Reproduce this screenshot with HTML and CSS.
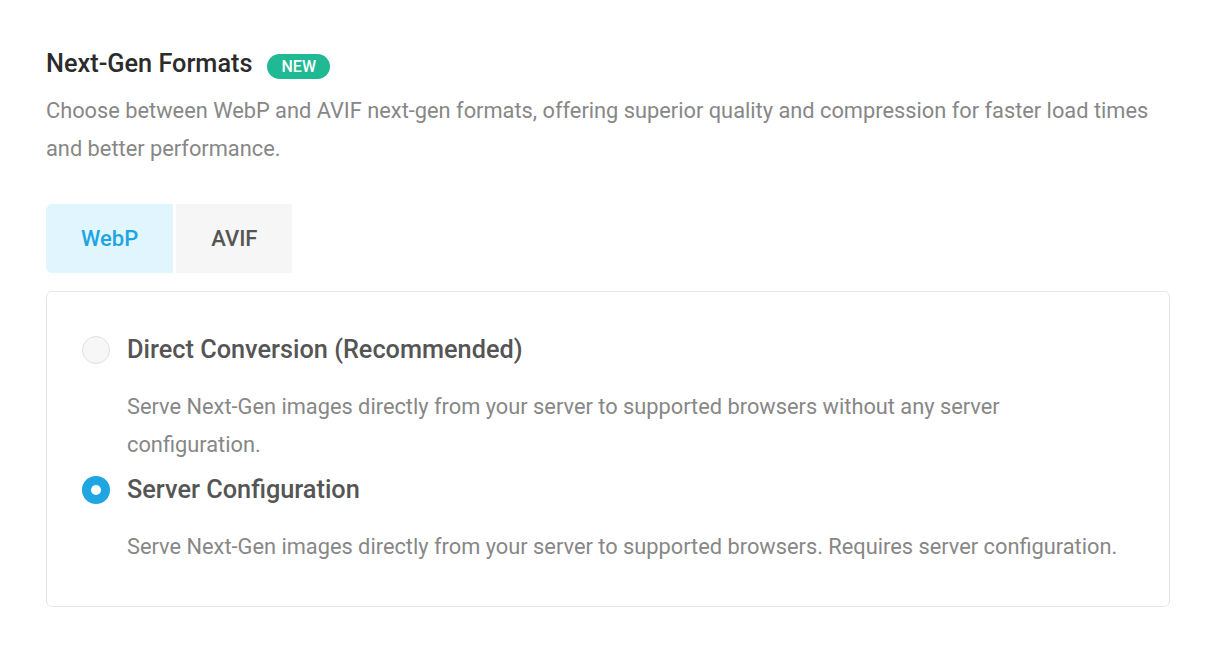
FILE: index.html
```html
<!DOCTYPE html>
<html lang="en">
<head>
  <meta charset="UTF-8">
  <meta name="viewport" content="width=device-width, initial-scale=1.0">
  <title>Next-Gen Formats</title>
  <link rel="stylesheet" href="styles.css">
</head>
<body>

  <div class="settings">
    <h2 class="title">Next-Gen Formats <span class="badge">NEW</span></h2>
    <p class="intro">Choose between WebP and AVIF next-gen formats, offering superior quality and compression for faster load times and better performance.</p>

    <div class="tabs">
      <button class="tab active">WebP</button>
      <button class="tab">AVIF</button>
    </div>

    <div class="panel">
      <label class="option">
        <span class="radio"></span>
        <span class="option-label">Direct Conversion (Recommended)</span>
      </label>
      <p class="option-desc">Serve Next-Gen images directly from your server to supported browsers without any server configuration.</p>

      <label class="option">
        <span class="radio checked"></span>
        <span class="option-label">Server Configuration</span>
      </label>
      <p class="option-desc">Serve Next-Gen images directly from your server to supported browsers. Requires server configuration.</p>
    </div>
  </div>

</body>
</html>
```

FILE: styles.css
```css
body {
  margin: 0;
  background: #fff;
  font-family: Roboto, Arial, sans-serif;
}
.settings {
  width: 1124px;
  padding: 48px 0 0 46px;
}
.title {
  margin: 0;
  font-size: 25.3px;
  line-height: 32px;
  font-weight: 500;
  color: #2b2b2b;
  display: flex;
  align-items: center;
  gap: 15px;
}
.badge {
  background: #1fb993;
  color: #fff;
  font-size: 16px;
  font-weight: 500;
  line-height: 25px;
  padding: 0 14px;
  border-radius: 13px;
  margin-top: 4px;
}
.intro {
  margin: 12px 0 0;
  font-size: 21.8px;
  line-height: 38px;
  color: #878787;
}
.tabs {
  display: flex;
  gap: 3px;
  margin-top: 36px;
}
.tab {
  border: none;
  font-family: inherit;
  font-size: 22px;
  font-weight: 500;
  height: 69px;
  padding: 0 35px;
  background: #f6f6f6;
  color: #555;
  cursor: pointer;
}
.tab.active {
  background: #e1f5fe;
  color: #1ea5e2;
  border-radius: 6px 0 0 6px;
}
.panel {
  margin-top: 18px;
  border: 1px solid #e6e6e6;
  border-radius: 6px;
  padding: 40px 35px 40px 35px;
}
.option {
  display: flex;
  align-items: center;
  gap: 17px;
  cursor: pointer;
}
.option + .option-desc {
  margin-top: 20px;
}
.option-desc + .option {
  margin-top: 8px;
}
.radio {
  width: 26px;
  height: 26px;
  border-radius: 50%;
  border: 1px solid #e0e0e0;
  background: #f7f7f7;
  flex-shrink: 0;
}
.radio.checked {
  width: 28px;
  height: 28px;
  border: none;
  background: #1ea5e2;
  display: flex;
  align-items: center;
  justify-content: center;
}
.radio.checked::after {
  content: "";
  width: 10px;
  height: 10px;
  border-radius: 50%;
  background: #fff;
}
.option-label {
  font-size: 25.3px;
  line-height: 36px;
  font-weight: 500;
  color: #555;
}
.option-desc {
  margin: 0 0 0 45px;
  max-width: 1000px;
  font-size: 21.8px;
  line-height: 38px;
  color: #878787;
}
```
